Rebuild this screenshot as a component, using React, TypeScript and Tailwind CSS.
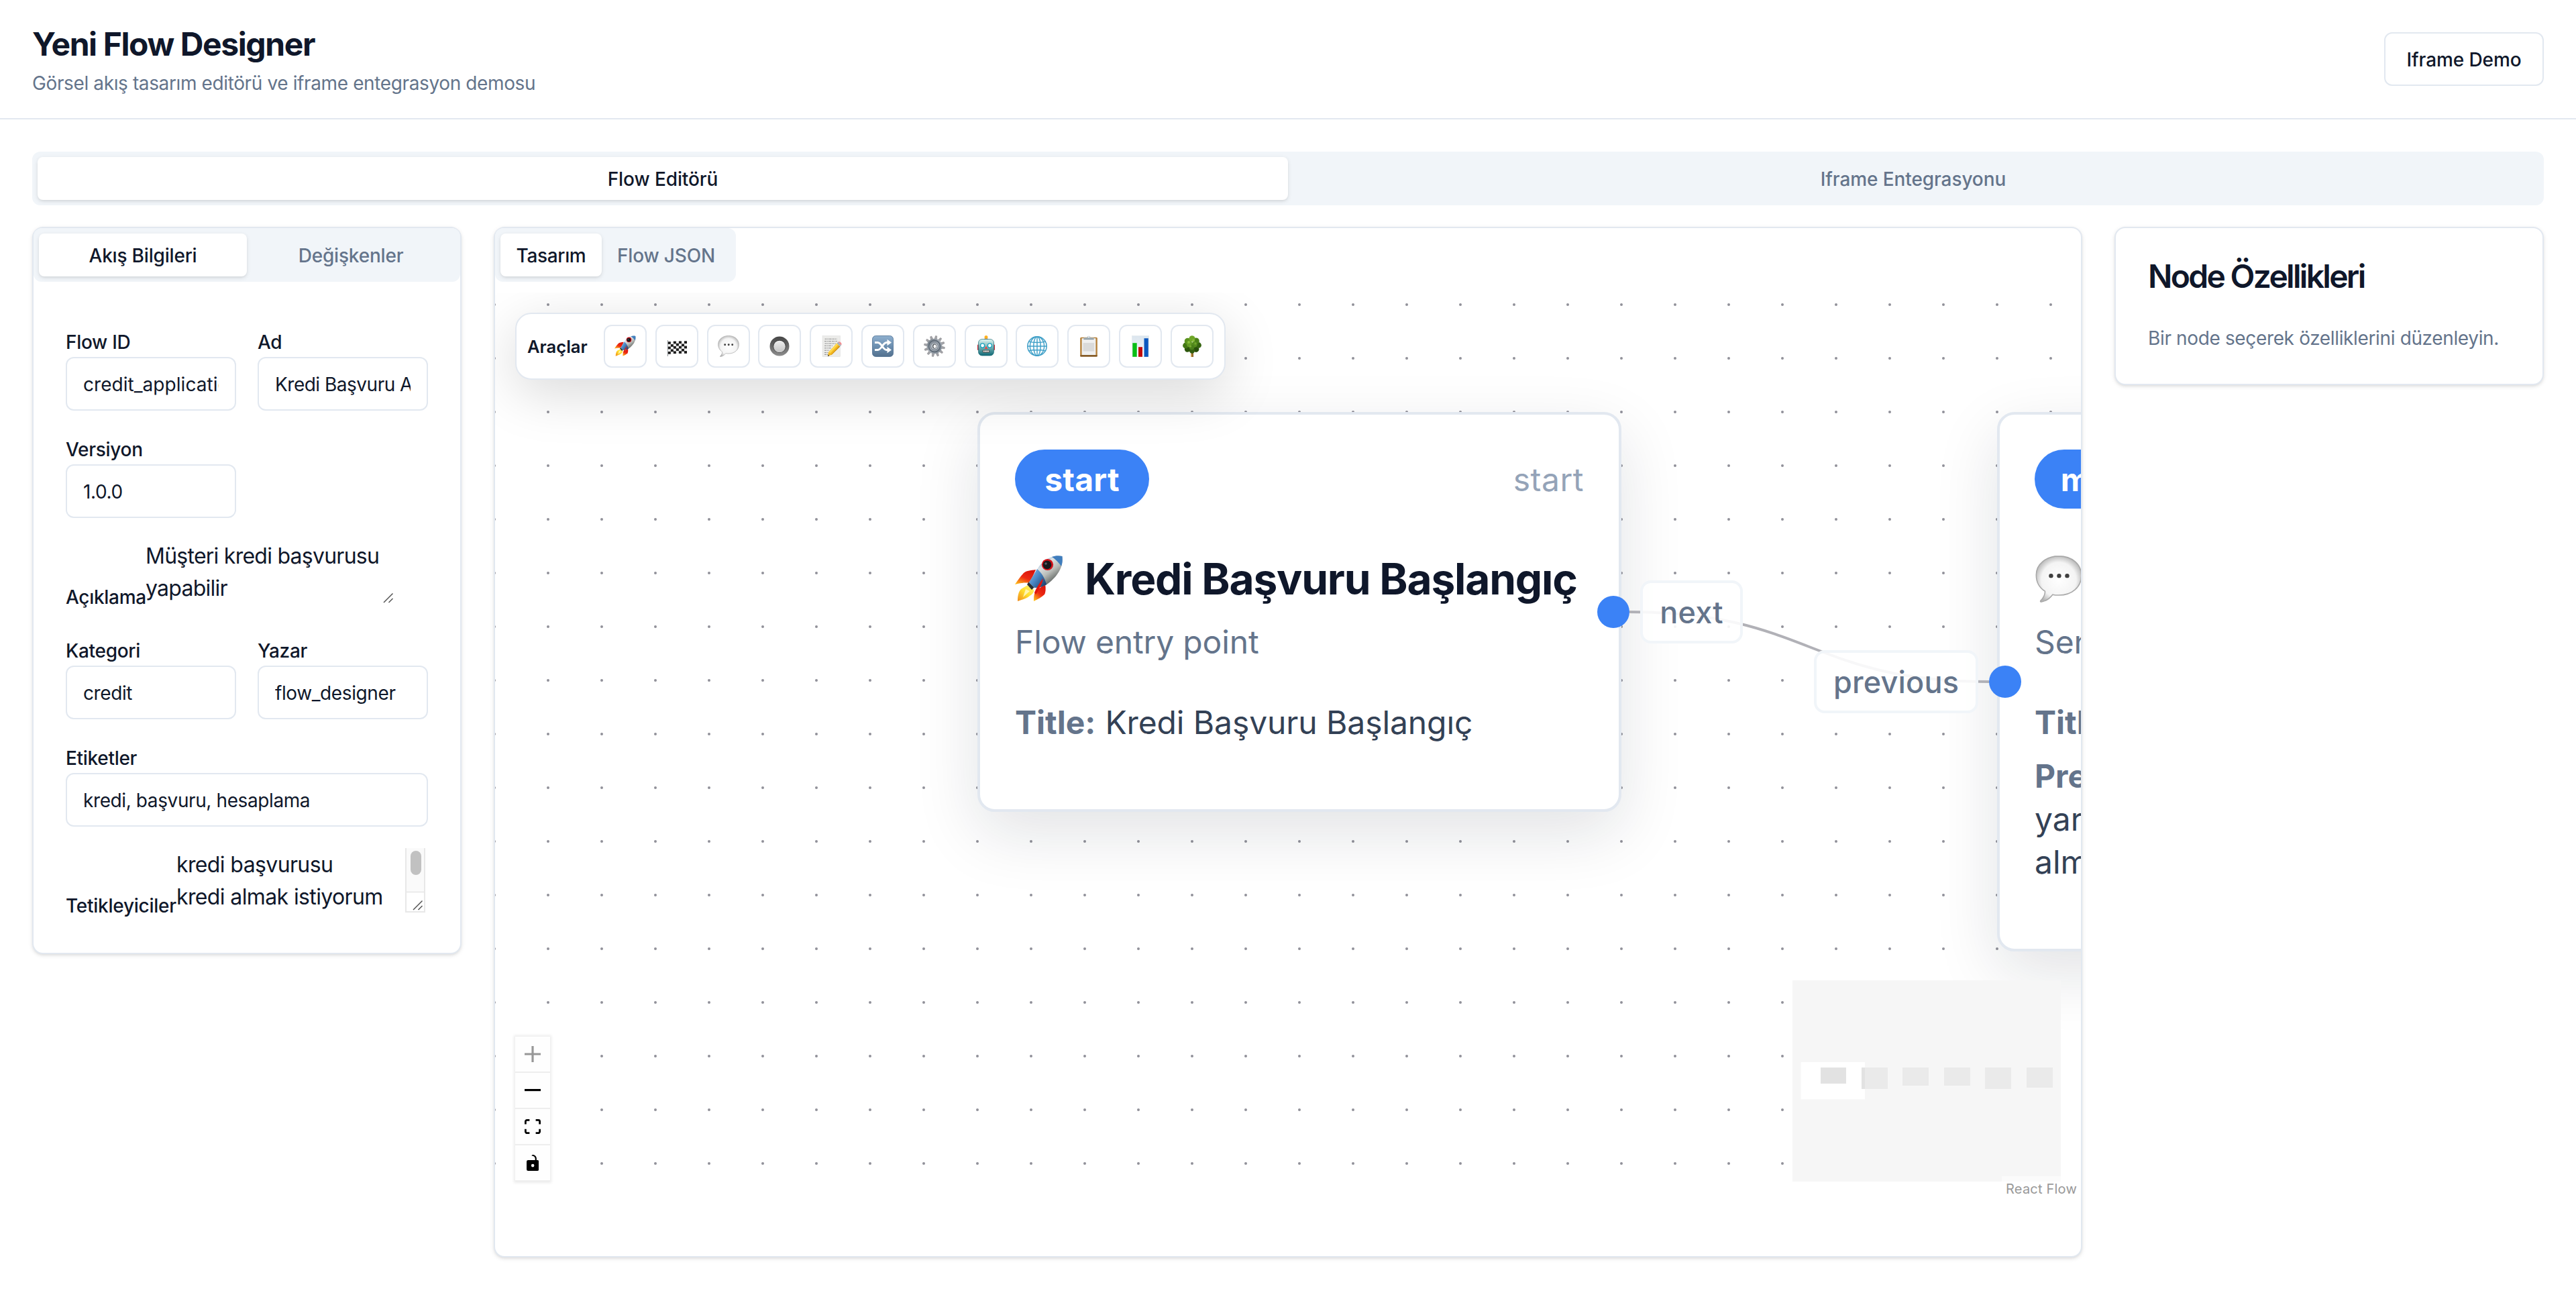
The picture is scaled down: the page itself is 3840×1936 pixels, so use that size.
import type { ReactNode } from 'react';

/* ---------- Emoji style glyphs ---------- */

function Rocket() {
  return (
    <svg viewBox="0 0 72 70" className="h-full w-full">
      <defs>
        <linearGradient id="rkBody" x1="0.2" y1="0.1" x2="0.75" y2="0.8">
          <stop offset="0" stopColor="#4f8ec9" />
          <stop offset="0.35" stopColor="#dfe3e4" />
          <stop offset="0.65" stopColor="#b9bcb8" />
          <stop offset="1" stopColor="#5d625f" />
        </linearGradient>
        <linearGradient id="rkTail" x1="0" y1="0" x2="1" y2="0.8">
          <stop offset="0" stopColor="#8fc1ec" />
          <stop offset="0.5" stopColor="#4a86c4" />
          <stop offset="1" stopColor="#1d3f6c" />
        </linearGradient>
        <linearGradient id="rkFin" x1="0.7" y1="0" x2="0.1" y2="1">
          <stop offset="0" stopColor="#d8140c" />
          <stop offset="0.5" stopColor="#ee2a12" />
          <stop offset="1" stopColor="#ffc21a" />
        </linearGradient>
        <linearGradient id="rkFlame" x1="1" y1="0" x2="0" y2="1">
          <stop offset="0" stopColor="#fff37a" />
          <stop offset="0.5" stopColor="#ffdf2e" />
          <stop offset="1" stopColor="#f08a1c" />
        </linearGradient>
      </defs>
      <path d="M31 21C23 22 16 23 13 26C8 31 4 37 0 43C7 41 14 40 22 41Z" fill="url(#rkFin)" />
      <path d="M45 42C46 49 46 54 44 58C40 62 34 65 28 68C28 63 28 59 30 54Z" fill="url(#rkFin)" />
      <path d="M19 44L28 51C29 54 26 58 22 60C18 64 10 66 4 68C4 61 5 54 9 50Z" fill="url(#rkFlame)" />
      <path d="M16 50L22 53L12 62Z" fill="#fffbd0" opacity="0.8" />
      <path d="M18 43L21 39L29 47L25 51Z" fill="#2b2f36" />
      <path d="M70.500 1C57 -2 44 6 36 16L21 40L29 48C35 48 41 46 46 44C59 35 73 20 70.500 1Z" fill="url(#rkBody)" />
      <path d="M33 20L21 40L29 48C36 48 42 46 47 43C44 33 40 26 33 20Z" fill="url(#rkTail)" />
      <path d="M70.500 1C65 -.5 60 0 55 2C60 5 66 11 69 16C71 11 71 6 70.500 1Z" fill="#3f7dbd" />
      <path d="M42 34C37 40 32 48 29 55L31 58C36 50 41 42 42 34Z" fill="#e0160f" />
      <circle cx="48.500" cy="13.500" r="8.600" fill="#d3121a" />
      <circle cx="48" cy="13.800" r="6.400" fill="#17181c" />
      <circle cx="46" cy="12" r="1.800" fill="#5a5e66" />
    </svg>
  );
}

const flagRows = [0, 1, 2, 3, 4];
const flagCols = [0, 1, 2, 3, 4, 5, 6];

function Flag() {
  return (
    <svg viewBox="0 0 32 32" className="h-full w-full">
      <path d="M2.300 7v24" stroke="#8b9094" strokeWidth="1" />
      <path d="M2.800 9C8 11.500 12 7.500 18 8.500C23 9.500 27 9 31 7.500V26C26 28 22 27.500 18 26.800C12 26 8 29.500 2.800 27.500Z" fill="#f1f1f1" />
      {flagRows.map((r) =>
        flagCols.map((c) =>
          (r + c) % 2 === 0 ? (
            <rect
              key={`${r}-${c}`}
              x={2.8 + c * 4.03}
              y={8.6 + r * 3.7 + [0.6, 0.8, 0, -0.5, -0.2, 0.2, -0.3][c]}
              width="4.030"
              height="3.700"
              fill="#1c1c1c"
            />
          ) : null,
        ),
      )}
    </svg>
  );
}

function Bubble() {
  return (
    <svg viewBox="0 0 32 32" className="h-full w-full">
      <defs>
        <radialGradient id="bbFill" cx="0.5" cy="0.52" r="0.55">
          <stop offset="0" stopColor="#ffffff" />
          <stop offset="0.7" stopColor="#f4f4f4" />
          <stop offset="1" stopColor="#b4b4b4" />
        </radialGradient>
      </defs>
      <path
        d="M16 .4C7.400 .4 .6 5.800 .6 13.200C.6 18.200 3 22 6.600 24.300C6.800 27.200 5.400 29 3.600 30.800C3.300 31.300 3.600 31.600 4.200 31.500C7.600 31 10 29 11.800 26.600C13 26.900 14.500 27 16 27C25 27 31.400 21.400 31.400 13.600C31.400 5.800 25 .4 16 .4Z"
        fill="url(#bbFill)"
        stroke="#a8a8a8"
        strokeWidth="0.700"
      />
      <circle cx="10.700" cy="13.800" r="1.450" fill="#3f3f3f" />
      <circle cx="16.200" cy="13.800" r="1.450" fill="#3f3f3f" />
      <circle cx="21.700" cy="13.800" r="1.450" fill="#3f3f3f" />
    </svg>
  );
}

function Radio() {
  return (
    <svg viewBox="0 0 32 32" className="h-full w-full">
      <defs>
        <linearGradient id="rdRing" x1="0" y1="0" x2="0" y2="1">
          <stop offset="0" stopColor="#454545" />
          <stop offset="1" stopColor="#8d8d8d" />
        </linearGradient>
        <linearGradient id="rdDot" x1="0" y1="0" x2="0" y2="1">
          <stop offset="0" stopColor="#efefef" />
          <stop offset="1" stopColor="#c4c4c4" />
        </linearGradient>
      </defs>
      <circle cx="16" cy="16" r="14.500" fill="url(#rdRing)" />
      <circle cx="16" cy="16.300" r="9.600" fill="#3f3f3f" />
      <circle cx="16" cy="16.500" r="8.800" fill="url(#rdDot)" />
    </svg>
  );
}

function Memo() {
  return (
    <svg viewBox="0 0 32 32" className="h-full w-full">
      <rect x="3" y="0.500" width="26.500" height="31" fill="#ececea" stroke="#dcdcda" strokeWidth="0.500" />
      <g stroke="#8f8f8f" strokeWidth="1" strokeDasharray="3 0.800 1.600 0.700 4 0.900">
        <path d="M6.500 5.200h18M6 8.600h19M6.500 12h17M6 15.400h12M6 18.800h10M6 22.200h7M6 25.600h6M6 28.400h5" />
      </g>
      <path d="M24.500 11.500L29.200 16.500L17 28.500L11 31L12 25Z" fill="#f4b820" />
      <path d="M24.500 11.500L26.500 13.600L14.500 26.500L12 25Z" fill="#ffd84d" />
      <path d="M28 15.400L29.200 16.500L17 28.500L15.600 28.900Z" fill="#c98b14" />
      <path d="M24.500 11.500L26.500 9.600L31 14.600L29.200 16.500Z" fill="#a9b3b8" />
      <path d="M26.500 9.600C28 8.600 30 9.600 31 11.200C31.700 12.600 31.600 13.800 31 14.600Z" fill="#f08a8f" />
      <path d="M11.500 28.600L11 31L13.300 30Z" fill="#333333" />
    </svg>
  );
}

function ShuffleGlyph() {
  return (
    <svg viewBox="0 0 32 32" className="h-full w-full">
      <defs>
        <linearGradient id="shBg" x1="0" y1="0" x2="0" y2="1">
          <stop offset="0" stopColor="#8fb0cf" />
          <stop offset="0.5" stopColor="#6c8fb0" />
          <stop offset="1" stopColor="#54718e" />
        </linearGradient>
      </defs>
      <rect x="0.500" y="0.500" width="31" height="31" rx="5" fill="url(#shBg)" stroke="#4d6f92" strokeWidth="0.800" />
      <g fill="none" stroke="#ffffff" strokeWidth="3">
        <path d="M4 10.500H8.500C14 10.500 16 21.500 21.500 21.500H24" />
        <path d="M4 21.500H8.500C14 21.500 16 10.500 21.500 10.500H24" />
      </g>
      <path d="M22.500 5.800L29 10.500L22.500 15.200ZM22.500 16.800L29 21.500L22.500 26.200Z" fill="#ffffff" />
    </svg>
  );
}

const teeth = [0, 30, 60, 90, 120, 150, 180, 210, 240, 270, 300, 330];

function Gear() {
  return (
    <svg viewBox="0 0 32 32" className="h-full w-full">
      <defs>
        <linearGradient id="grFill" x1="0" y1="0" x2="1" y2="1">
          <stop offset="0" stopColor="#6e7882" />
          <stop offset="0.5" stopColor="#a9b0b8" />
          <stop offset="1" stopColor="#7d8791" />
        </linearGradient>
      </defs>
      {teeth.map((a) => (
        <path key={a} d="M14.300 6L15.300 .5H17.600L18.200 6Z" fill="#a3a4a8" stroke="#77757a" strokeWidth="0.400" transform={`rotate(${a + 8} 16 16)`} />
      ))}
      <circle cx="16" cy="16" r="11.300" fill="url(#grFill)" />
      <circle cx="16" cy="16" r="8.500" fill="none" stroke="#5f6b77" strokeWidth="1.800" />
      <circle cx="16" cy="16" r="6.400" fill="#858f9a" />
      <circle cx="16" cy="16" r="4.600" fill="#d5dade" />
      <ellipse cx="16" cy="16" rx="3.200" ry="3.800" fill="#5d6369" />
      <ellipse cx="16.500" cy="16.200" rx="2" ry="2.600" fill="#ffffff" />
    </svg>
  );
}

function Robot() {
  return (
    <svg viewBox="0 0 32 32" className="h-full w-full">
      <defs>
        <linearGradient id="rbFace" x1="0" y1="0" x2="0" y2="1">
          <stop offset="0" stopColor="#e2f6f3" />
          <stop offset="0.42" stopColor="#84bcbd" />
          <stop offset="1" stopColor="#0f6875" />
        </linearGradient>
      </defs>
      <ellipse cx="16" cy="6.200" rx="3.200" ry="2" fill="#5b3f7d" />
      <circle cx="16" cy="2.600" r="2.500" fill="#ffb01f" />
      <rect x="3" y="13.500" width="3" height="8.500" rx="1" fill="#cc2b38" />
      <rect x="26" y="13.500" width="3" height="8.500" rx="1" fill="#cc2b38" />
      <rect x="4.500" y="5.500" width="23" height="24.500" rx="5.500" fill="url(#rbFace)" stroke="#1f6f79" strokeWidth="0.700" />
      <circle cx="10.600" cy="15" r="3.700" fill="#19a2bd" />
      <circle cx="21.400" cy="15" r="3.700" fill="#19a2bd" />
      <circle cx="10.600" cy="15" r="2.400" fill="#ffffff" />
      <circle cx="21.400" cy="15" r="2.400" fill="#ffffff" />
      <path d="M16 15.500L18.200 20H13.800Z" fill="#ea4444" />
      <rect x="10.800" y="21.800" width="10.400" height="3.600" rx="0.800" fill="#4a4440" />
      <path d="M11.800 22.600h1.700v2h-1.700zM14 22.600h1.700v2h-1.700zM16.300 22.600h1.700v2h-1.700zM18.500 22.600h1.700v2h-1.700z" fill="#ffffff" />
    </svg>
  );
}

function Globe() {
  return (
    <svg viewBox="0 0 32 32" className="h-full w-full">
      <g fill="none" stroke="#3f9fc7" strokeWidth="1.400">
        <circle cx="16" cy="16" r="14.200" fill="#fbfeff" strokeWidth="1.500" />
        <ellipse cx="16" cy="16" rx="5.200" ry="14.200" />
        <ellipse cx="16" cy="16" rx="10.600" ry="14.200" />
        <path d="M16 1.800v28.400M1.800 16h28.400M3.600 9.200C10 11 22 11 28.400 9.200M3.600 22.800C10 21 22 21 28.400 22.800" />
      </g>
    </svg>
  );
}

function Clipboard() {
  return (
    <svg viewBox="0 0 32 32" className="h-full w-full">
      <rect x="3.200" y="2.800" width="25.600" height="28.800" rx="1.500" fill="#b5803a" />
      <rect x="3.200" y="29.200" width="25.600" height="2.400" rx="1" fill="#7d5524" />
      <rect x="5.600" y="4.200" width="20.800" height="24.800" fill="#efefef" />
      <rect x="7.600" y="11" width="16.500" height="12.500" fill="#dadada" />
      <path d="M8.500 3.200H13.500C13.800 -.2 18.200 -.2 18.500 3.200H23.500V6H8.500Z" fill="#a9b7bf" />
      <rect x="8.500" y="4.800" width="15" height="1.300" fill="#83939c" />
      <circle cx="16" cy="2.200" r="1" fill="#ffffff" />
    </svg>
  );
}

function BarChart() {
  return (
    <svg viewBox="0 0 32 32" className="h-full w-full">
      <defs>
        <linearGradient id="bcBg" x1="0" y1="0" x2="0" y2="1">
          <stop offset="0" stopColor="#dbe5ee" />
          <stop offset="1" stopColor="#f5f9fc" />
        </linearGradient>
      </defs>
      <rect x="3.500" y="0.500" width="25" height="31" fill="url(#bcBg)" stroke="#dfe5ea" strokeWidth="0.500" />
      <rect x="4.300" y="11.200" width="6.400" height="20.600" fill="#08bd14" />
      <rect x="13" y="17.200" width="6" height="14.600" fill="#c20a0a" />
      <rect x="21.500" y="4.200" width="6.300" height="27.600" fill="#0b58bf" />
    </svg>
  );
}

const leaves: [number, number, number, string][] = [
  [9, 20.5, 4.2, '#2c560c'],
  [22, 20.5, 4.4, '#284f0b'],
  [16, 22.5, 4.2, '#325e0f'],
  [6.5, 15, 4.4, '#437614'],
  [25.5, 14.5, 4.4, '#356410'],
  [9.5, 8.5, 4.8, '#5b931e'],
  [22, 8.2, 4.8, '#4a8017'],
  [16, 4.8, 4.6, '#6fa628'],
  [12.5, 13, 4.6, '#659c25'],
  [19.5, 13.5, 4.4, '#538a1c'],
  [15.5, 17.6, 3.8, '#4a8019'],
  [11, 10, 2, '#8abf3c'],
  [18, 7.5, 2, '#86ba39'],
  [13.5, 16, 1.7, '#79ae31'],
  [21, 12, 1.7, '#71a62c'],
];

function Tree() {
  return (
    <svg viewBox="0 0 32 32" className="h-full w-full">
      <path d="M14.200 24h3.200L17.800 32H14.400Z" fill="#b88a3a" />
      <path d="M16.300 24h1.600L18 32H16.600Z" fill="#7e5a20" />
      {leaves.map(([x, y, r, fill], i) => (
        <circle key={i} cx={x} cy={y} r={r} fill={fill} />
      ))}
    </svg>
  );
}

const tools: [string, () => ReactNode][] = [
  ['Start', Rocket],
  ['Finish', Flag],
  ['Message', Bubble],
  ['Button', Radio],
  ['Form', Memo],
  ['Condition', ShuffleGlyph],
  ['Service', Gear],
  ['Bot', Robot],
  ['Web', Globe],
  ['Clipboard', Clipboard],
  ['Report', BarChart],
  ['Tree', Tree],
];

/* ---------- Form pieces ---------- */

function Field({
  label,
  value,
  wide = false,
  tracking = 'tracking-[-0.4px]',
}: {
  label: string;
  value: string;
  wide?: boolean;
  tracking?: string;
}) {
  return (
    <div className={wide ? 'w-full' : 'w-[254px]'}>
      <label className="block h-12 pt-3 text-[28px] leading-[28px] font-medium tracking-[-0.3px]">{label}</label>
      <input
        className={`block h-20 w-full rounded-xl border-2 border-[#e2e8f0] bg-white px-6 pt-0.5 text-[28px] outline-none ${tracking}`}
        defaultValue={value}
      />
    </div>
  );
}

function ResizeGrip() {
  return (
    <svg className="absolute right-0 bottom-0 size-5" viewBox="0 0 20 20" fill="none" stroke="#555555" strokeWidth="1.500">
      <path d="M4 18L17.500 4.500M11.500 18L17.500 12" />
    </svg>
  );
}

/* ---------- Flow canvas pieces ---------- */

function Handle({ className }: { className: string }) {
  return <span className={`absolute size-12 rounded-full bg-[#3b82f6] ${className}`} />;
}

function NodeHeader({ type, id, wide }: { type: string; id: string; wide: string }) {
  return (
    <div className="flex items-center justify-between">
      <span
        className={`flex h-[88px] items-center justify-center rounded-full bg-[#3b82f6] pt-0.5 text-[48px] font-bold tracking-[0.2px] text-white ${wide}`}
      >
        {type}
      </span>
      <span className="pt-0.5 text-[48px] tracking-[0.5px] text-[#94a3b8]">{id}</span>
    </div>
  );
}

function FlowNode({
  place,
  type,
  id,
  wide,
  icon,
  title,
  subtitle,
  children,
}: {
  place: string;
  type: string;
  id: string;
  wide: string;
  icon: ReactNode;
  title: string;
  subtitle: string;
  children: ReactNode;
}) {
  return (
    <div
      className={`absolute top-[178px] w-[960px] rounded-[26px] border-4 border-[#e2e8f0] bg-white px-[52px] pt-[52px] whitespace-nowrap shadow-[0_32px_96px_rgba(15,23,42,0.12)] ${place}`}
    >
      <NodeHeader type={type} id={id} wide={wide} />
      <div className="mt-[67px] flex h-[76px] items-center gap-[32px]">
        <span className="h-[70px] w-[72px] shrink-0">{icon}</span>
        <span className="text-[64px] leading-[76px] font-bold tracking-[-1.2px]">{title}</span>
      </div>
      <div className="mt-[24px] text-[48px] leading-[64px] tracking-[-0.15px] text-[#64748b]">{subtitle}</div>
      <div className="mt-[56px] flex flex-col gap-4 text-[48px] leading-[64px] text-[#334155]">{children}</div>
    </div>
  );
}

function Key({ children }: { children: string }) {
  return <span className="mr-[14px] font-bold text-[#64748b]">{children}</span>;
}

function EdgeLabel({ place, children }: { place: string; children: string }) {
  return (
    <div
      className={`absolute flex h-[94px] items-center justify-center rounded-2xl border-4 border-[#f1f5f9] bg-white/90 pt-0.5 text-[45px] font-medium tracking-[0.2px] text-[#64748b] ${place}`}
    >
      {children}
    </div>
  );
}

function ControlButton({ children }: { children: ReactNode }) {
  return <button className="box-content flex size-[52px] items-center justify-center border-b-2 border-[#eeeeee] bg-[#fefefe]">{children}</button>;
}

const miniNodes: [number, number, number][] = [
  [42, 38, 24],
  [103, 39, 32],
  [164, 39, 27],
  [226, 39, 27],
  [287, 39, 32],
  [349, 39, 30],
];

function MiniMap() {
  return (
    <svg className="absolute right-[30px] bottom-[30px] h-[300px] w-[400px]" viewBox="0 0 400 300">
      <rect width="400" height="300" fill="#ffffff" />
      {miniNodes.map(([x, w, h]) => (
        <rect key={x} x={x} y="130" width={w} height={h} fill="#e2e2e2" />
      ))}
      <path d="M0 0H400V300H0ZM12.500 122V177.500H108V122Z" fillRule="evenodd" fill="#f0f0f0" fillOpacity="0.600" />
    </svg>
  );
}

function FlowCanvas() {
  return (
    <div className="relative mt-4 h-[1355px] w-full overflow-hidden">
      <svg className="absolute inset-0 h-full w-full">
        <defs>
          <pattern id="dots" x="-41" y="-22" width="80" height="80" patternUnits="userSpaceOnUse">
            <circle cx="40" cy="40" r="2" fill="#91919a" />
          </pattern>
        </defs>
        <rect width="100%" height="100%" fill="url(#dots)" />
      </svg>

      <FlowNode
        place="left-[719px] h-[596px]"
        type="start"
        id="start"
        wide="w-[200px]"
        icon={<Rocket />}
        title="Kredi Başvuru Başlangıç"
        subtitle="Flow entry point"
      >
        <div>
          <Key>Title:</Key>
          <span className="tracking-[-0.1px]">Kredi Başvuru Başlangıç</span>
        </div>
      </FlowNode>

      <FlowNode
        place="left-[2239px] h-[804px]"
        type="message"
        id="message"
        wide="w-[292px]"
        icon={<Bubble />}
        title="Mesaj"
        subtitle="Send message"
      >
        <div>
          <Key>Title:</Key>
          <span>Mesaj</span>
        </div>
        <div>
          <Key>Preview:</Key>
          <br />
          yardımcı
          <br />
          almak
        </div>
      </FlowNode>

      <svg className="absolute inset-0 h-full w-full" fill="none" stroke="#b1b1b7" strokeWidth="4">
        <path d="M1691 476C1959 476 1959 580 2227 580" />
      </svg>
      <EdgeLabel place="top-[429px] left-[1707px] w-[153px]">next</EdgeLabel>
      <EdgeLabel place="top-[533px] left-[1966px] w-[245px]">previous</EdgeLabel>
      <Handle className="top-[452px] left-[1643px]" />
      <Handle className="top-[556px] left-[2227px]" />

      <div className="absolute top-[30px] left-[30px] flex h-[100px] items-center rounded-3xl border-2 border-[#e2e8f0] bg-white px-4 shadow-[0_20px_80px_rgba(0,0,0,0.15)]">
        <span className="w-[114px] pt-0.5 text-[25.6px] font-semibold">Araçlar</span>
        <div className="flex gap-[12.8px]">
          {tools.map(([name, Icon]) => (
            <button key={name} aria-label={name} className="flex size-16 items-center justify-center rounded-xl border-2 border-[#e2e8f0] bg-white">
              <span className="size-8">
                <Icon />
              </span>
            </button>
          ))}
        </div>
      </div>

      <div className="absolute bottom-[30px] left-[30px] flex flex-col shadow-[0_0_4px_2px_rgba(0,0,0,0.08)]">
        <ControlButton>
          <svg viewBox="0 0 32 32" className="size-6 opacity-40">
            <path d="M32 18.133H18.133V32h-4.266V18.133H0v-4.266h13.867V0h4.266v13.867H32z" />
          </svg>
        </ControlButton>
        <ControlButton>
          <svg viewBox="0 0 32 5" className="w-6">
            <path d="M0 0h32v4.200H0z" />
          </svg>
        </ControlButton>
        <ControlButton>
          <svg viewBox="0 0 32 30" className="w-6">
            <path d="M3.692 4.630c0-.53.4-.938.939-.938h5.215V0H4.708C2.130 0 0 2.054 0 4.630v5.216h3.692V4.631zM27.354 0h-5.200v3.692h5.170c.53 0 .984.400.984.939v5.215H32V4.631A4.624 4.624 0 0027.354 0zm.954 24.830c0 .532-.4.940-.939.940h-5.215v3.768h5.215c2.577 0 4.631-2.130 4.631-4.707v-5.139h-3.692v5.139zm-23.677.940c-.531 0-.939-.4-.939-.940v-5.138H0v5.139c0 2.577 2.130 4.707 4.708 4.707h5.138V25.770H4.631z" />
          </svg>
        </ControlButton>
        <ControlButton>
          <svg viewBox="0 0 25 32" className="h-6">
            <path d="M21.333 10.667H19.810V7.619C19.810 3.429 16.380 0 12.190 0c-4.114 1.828-1.370 2.133.305 2.438 1.676.305 4.420 2.590 4.420 5.181v3.048H3.047A3.056 3.056 0 000 13.714v15.238A3.056 3.056 0 003.048 32h18.285a3.056 3.056 0 003.048-3.048V13.714a3.056 3.056 0 00-3.048-3.047zM12.190 24.533a3.056 3.056 0 01-3.047-3.047 3.056 3.056 0 013.047-3.048 3.056 3.056 0 013.048 3.048 3.056 3.056 0 01-3.048 3.047z" />
          </svg>
        </ControlButton>
      </div>

      <MiniMap />
      <div className="absolute right-0 bottom-0 bg-white/50 px-1.5 py-1 text-[20px] leading-[30px] tracking-[0.2px] text-[#999999]">React Flow</div>
    </div>
  );
}

/* ---------- Page ---------- */

const tabOn =
  'flex h-16 items-center justify-center rounded-lg bg-white pt-px font-medium shadow-[0_2px_6px_rgba(0,0,0,0.1),0_2px_4px_-2px_rgba(0,0,0,0.1)]';
const tabOff = 'flex h-16 items-center justify-center rounded-lg pt-px font-medium text-[#64748b]';
const card =
  'rounded-2xl border-2 border-[#e2e8f0] bg-white shadow-[0_2px_6px_rgba(0,0,0,0.1),0_2px_4px_-2px_rgba(0,0,0,0.1)]';

export default function App() {
  return (
    <div className="h-[1936px] w-full overflow-hidden bg-white font-['Inter',sans-serif] text-[#0f172a]">
      <header className="flex h-[178px] items-center justify-between border-b-2 border-[#e2e8f0] px-12">
        <div>
          <h1 className="pt-0.5 text-[48px] leading-[64px] font-bold tracking-[-1.4px]">Yeni Flow Designer</h1>
          <p className="mt-1.5 text-[28px] leading-[40px] tracking-[-0.38px] text-[#64748b]">
            Görsel akış tasarım editörü ve iframe entegrasyon demosu
          </p>
        </div>
        <button className="flex h-20 w-[238px] items-center justify-center rounded-xl border-2 border-[#e2e8f0] pt-px text-[28px] font-medium tracking-[-0.1px]">
          Iframe Demo
        </button>
      </header>

      <main className="px-12 pt-12">
        <div className="grid grid-cols-2 rounded-xl bg-[#f1f5f9] p-2 text-[28px] tracking-[-0.1px]">
          <div className={tabOn}>Flow Editörü</div>
          <div className={tabOff}>Iframe Entegrasyonu</div>
        </div>

        <div className="mt-8 flex items-start gap-12">
          <aside className={`w-[640px] shrink-0 ${card}`}>
            <div className="grid grid-cols-2 rounded-xl bg-[#f1f5f9] p-2 text-[28px] tracking-[-0.2px]">
              <div className={tabOn}>Akış Bilgileri</div>
              <div className={tabOff}>Değişkenler</div>
            </div>
            <div className="mt-4 flex flex-col gap-8 p-12">
              <div className="flex gap-8">
                <Field label="Flow ID" value="credit_application" tracking="tracking-[0.05px]" />
                <Field label="Ad" value="Kredi Başvuru Akışı" tracking="tracking-[-0.5px]" />
              </div>
              <Field label="Versiyon" value="1.0.0" />
              <div className="flex h-[108px]">
                <label className="mt-[72px] w-[119px] text-[28px] leading-[28px] font-medium tracking-[-0.3px]">Açıklama</label>
                <div className="relative h-24 w-[371px] pt-px text-[32px] leading-[48px] tracking-[-0.75px]">
                  Müşteri kredi başvurusu
                  <br />
                  yapabilir
                  <ResizeGrip />
                </div>
              </div>
              <div className="flex gap-8">
                <Field label="Kategori" value="credit" />
                <Field label="Yazar" value="flow_designer" />
              </div>
              <Field wide label="Etiketler" value="kredi, başvuru, hesaplama" />
              <div className="flex h-[108px]">
                <label className="mt-[72px] w-[165px] text-[28px] leading-[28px] font-medium tracking-[-0.26px]">Tetikleyiciler</label>
                <div className="flex h-24 w-[371px] justify-between text-[32px] leading-[48px] tracking-[-0.62px] whitespace-nowrap">
                  <div className="pt-px">
                    kredi başvurusu
                    <br />
                    kredi almak istiyorum
                  </div>
                  <div className="flex w-[30px] flex-col border-x-2 border-[#e8e8e8] bg-[#fafafa]">
                    <div className="flex h-[66px] justify-center border-b border-[#dddddd] pt-1">
                      <span className="ml-0.5 h-9 w-4 rounded-full bg-[#c1c1c1]" />
                    </div>
                    <div className="relative h-[30px] border-b-2 border-[#e8e8e8] bg-white">
                      <ResizeGrip />
                    </div>
                  </div>
                </div>
              </div>
            </div>
          </aside>

          <section className={`h-[1536px] w-[2368px] shrink-0 ${card}`}>
            <div className="flex w-[359px] rounded-xl bg-[#f1f5f9] p-2 text-[28px]">
              <div className={`${tabOn} w-[151px] tracking-[-0.35px]`}>Tasarım</div>
              <div className={`${tabOff} w-[192px] tracking-[-0.15px]`}>Flow JSON</div>
            </div>
            <FlowCanvas />
          </section>

          <aside className={`h-[236px] w-[640px] shrink-0 p-12 ${card}`}>
            <h2 className="text-[48px] leading-[48px] font-semibold tracking-[-2.7px]">Node Özellikleri</h2>
            <p className="mt-12 text-[28px] leading-[40px] tracking-[-0.36px] whitespace-nowrap text-[#64748b]">
              Bir node seçerek özelliklerini düzenleyin.
            </p>
          </aside>
        </div>
      </main>
    </div>
  );
}
